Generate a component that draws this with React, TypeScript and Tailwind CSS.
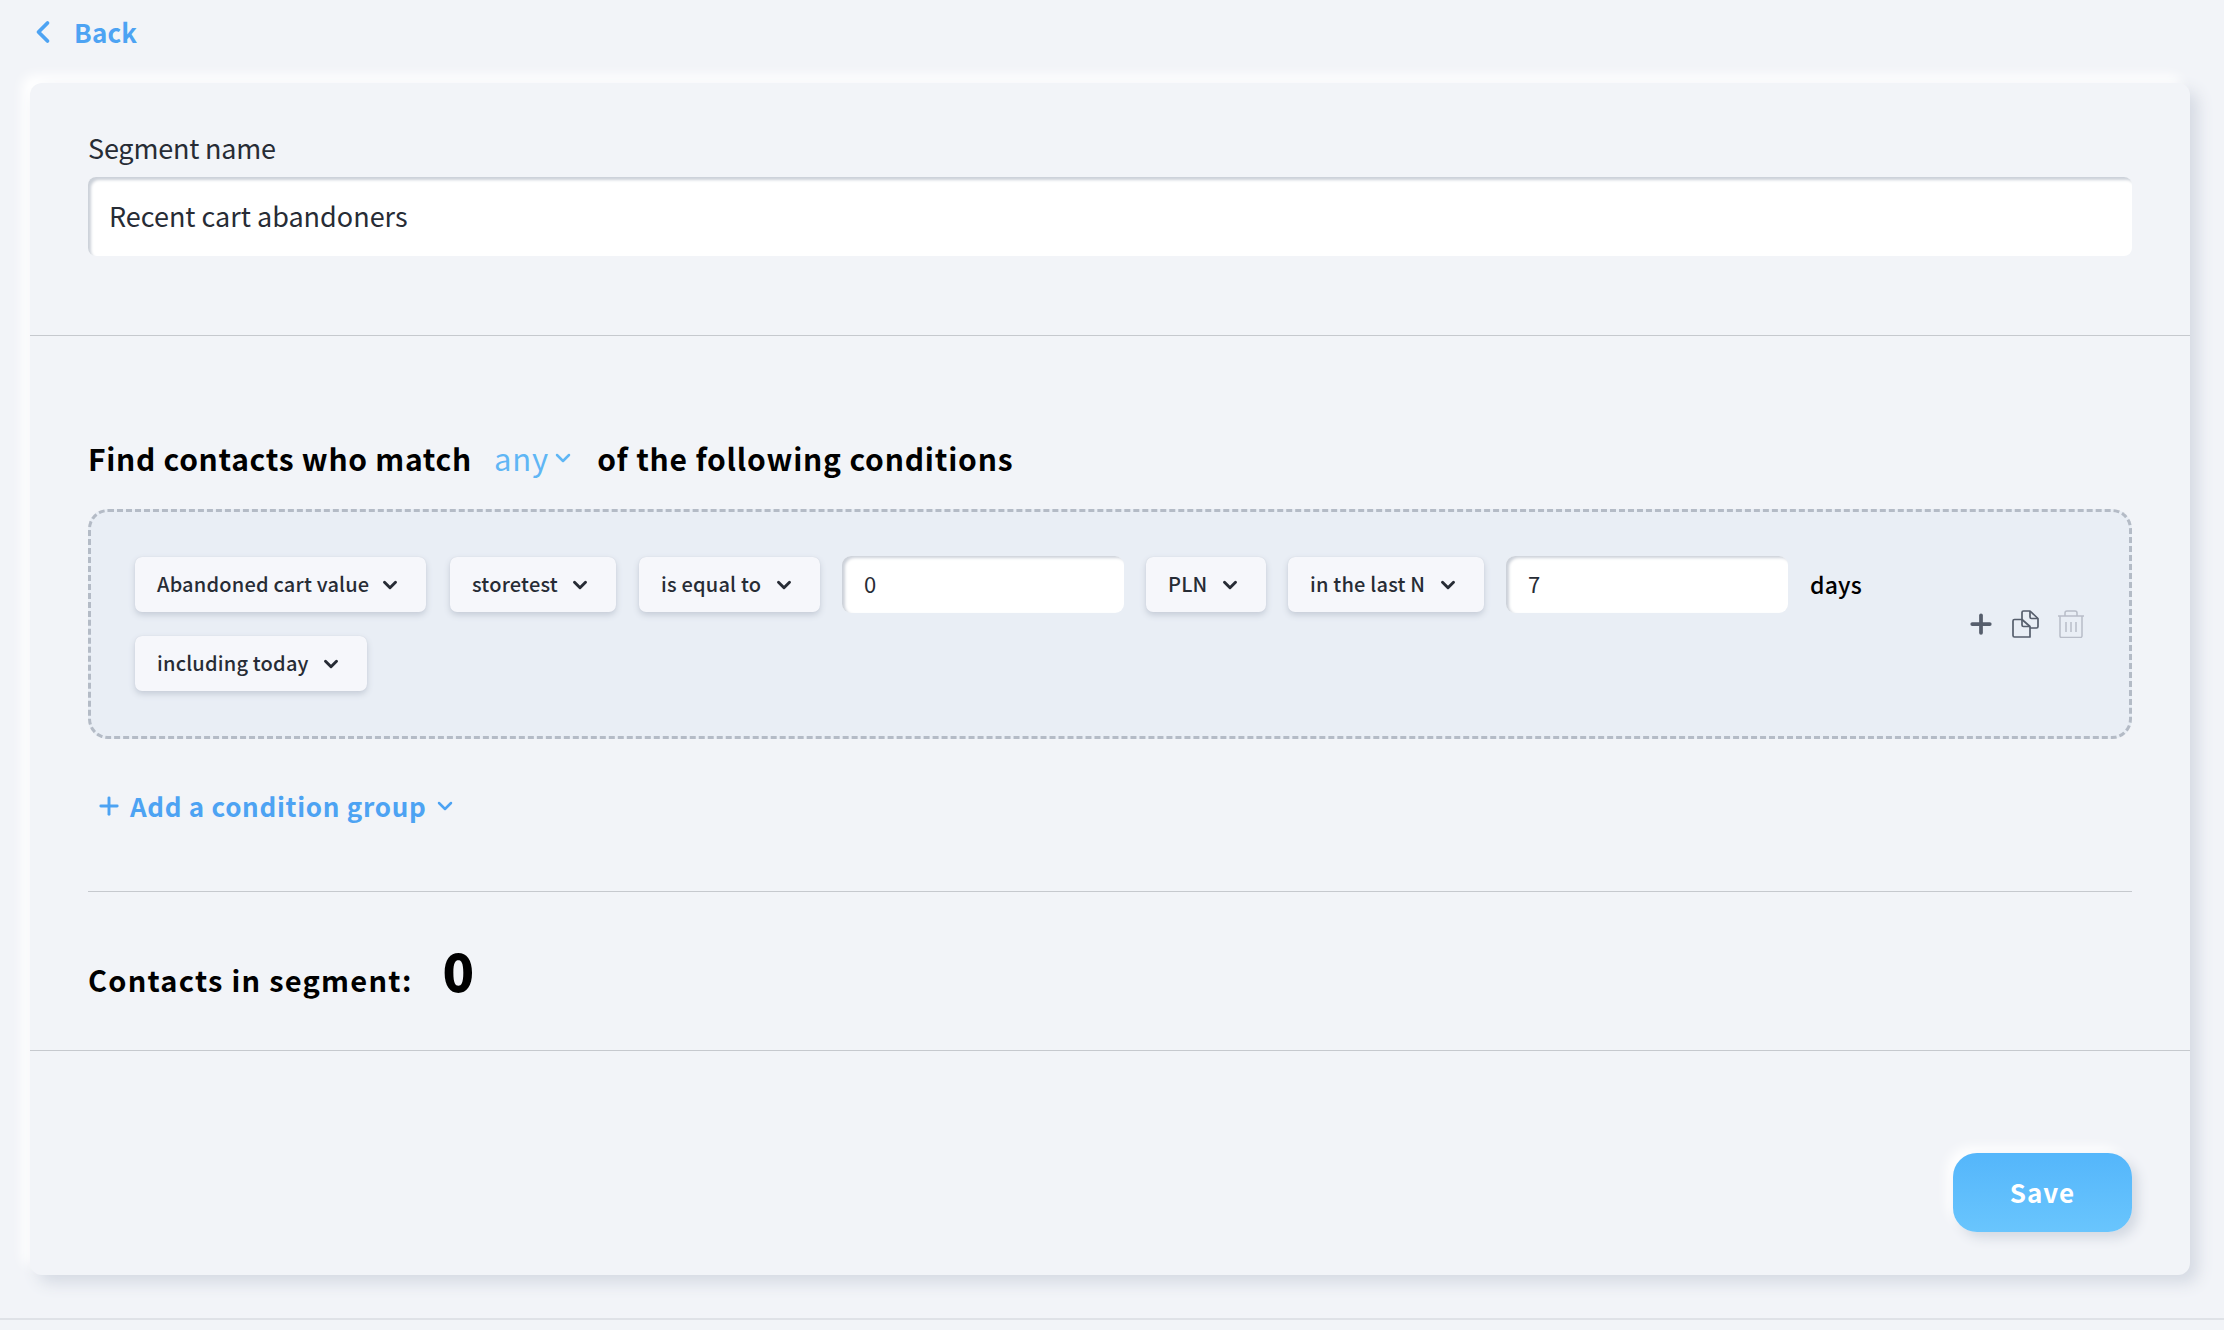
import { ChevronDown, ChevronLeft, Plus } from 'lucide-react';

const font = "font-['Noto_Sans_CJK_JP','Noto_Sans',sans-serif]";

// dropdown pill in a condition row
function Pill({ label, w }: { label: string; w: string }) {
  return (
    <button
      className={`${w} h-[55px] flex items-center justify-between pl-[22px] pr-[25px] rounded-[7px] bg-[#f6f7fb] shadow-[0_3px_6px_#c5ccd7,0_0_1px_#c5ccd7] text-[20px] font-medium text-[#272c35] tracking-[0.2px] whitespace-nowrap`}
    >
      <span className="pb-[1px]">{label}</span>
      <ChevronDown size={22} strokeWidth={3.2} className="text-[#272c35]" />
    </button>
  );
}

function ValueInput({ value }: { value: string }) {
  return (
    <div className="w-[282px] h-[57px] flex items-center pl-[22px] pb-[2px] rounded-[9px] bg-white shadow-[inset_3px_2px_3px_#ccd1d9] text-[22px] text-[#272c35]">
      {value}
    </div>
  );
}

function CopyIcon() {
  return (
    <svg width="28" height="28" viewBox="0 0 28 28" fill="none" stroke="#565e6c" strokeWidth="1.7" strokeLinejoin="round">
      <path d="M11 9.5V2.500A1.500 1.500 0 0 1 12.500 1H19l8 7.500V16.500A1.500 1.500 0 0 1 25.500 18H19" />
      <path d="M19 1v6a1.500 1.500 0 0 0 1.500 1.500H27" />
      <path d="M2 11A1.500 1.500 0 0 1 3.500 9.500H11l8 7V27H3.500A1.500 1.500 0 0 1 2 25.500Z" />
      <path d="M11 9.500v5.500a1.500 1.500 0 0 0 1.500 1.500H19" />
    </svg>
  );
}

function TrashIcon() {
  return (
    <svg width="28" height="28" viewBox="0 0 28 28" fill="none" stroke="#b8bdc8" strokeWidth="1.500">
      <path d="M1 6h26" />
      <path d="M8 6V3a2 2 0 0 1 2-2h8a2 2 0 0 1 2 2v3" />
      <path d="M3 6v20a1.500 1.500 0 0 0 1.500 1.500h19A1.500 1.500 0 0 0 25 26V6" />
      <path d="M9 12v10M14 12v10M19 12v10" />
    </svg>
  );
}

export default function App() {
  return (
    <div className={`${font} min-h-screen bg-[#f2f4f8] flex flex-col`}>
      {/* back link */}
      <div className="h-[83px] pl-[32px] pt-[14px] flex items-start">
        <a className="flex items-center gap-[13px] text-[26px] leading-[36px] font-bold text-[#4da3f3] tracking-[0.2px]">
          <ChevronLeft size={36} strokeWidth={2.5} className="-ml-[7px]" />
          Back
        </a>
      </div>

      <main className="mx-[30px] w-[2160px] h-[1192px] rounded-[12px] bg-[#f2f4f8] shadow-[8px_8px_16px_#d5dae3,-8px_-8px_12px_#ffffff] flex flex-col">
        <section className="h-[253px] px-[58px] pt-[47px] border-b-[1.5px] border-[#c6c9ce]">
          <label className="block text-[27px] leading-[36px] text-[#272c35] tracking-[-0.2px]">Segment name</label>
          <div className="mt-[11px] h-[79px] flex items-center pl-[21px] pb-[1px] rounded-[8px] bg-white shadow-[inset_3px_3px_3px_#ccd1d9] text-[27px] text-[#272c35]">
            Recent cart abandoners
          </div>
        </section>

        <section className="h-[555px] px-[58px]">
          <div className="pt-[99px] h-[173px] flex items-start text-[30px] leading-[46px] font-bold text-black">
            <span className="tracking-[0.7px]">Find contacts who match</span>
            <span className="ml-[22px] font-normal text-[31px] tracking-[0.9px] text-[#5fb6f5] flex items-center gap-[2px]">
              any
              <ChevronDown size={24} strokeWidth={2.5} />
            </span>
            <span className="ml-[22px] tracking-[0.8px]">of the following conditions</span>
          </div>

          <div className="h-[230px] flex items-center rounded-[20px] border-[3px] border-dashed border-[#b4bbc6] bg-[#e9eef5] pl-[44px] pr-[44px] pb-[1px]">
            <div className="flex-1 flex flex-wrap items-center gap-x-[22px] gap-y-[23px]">
              <Pill label="Abandoned cart value" w="w-[291px] mr-[2px]" />
              <Pill label="storetest" w="w-[166px] mr-[1px]" />
              <Pill label="is equal to" w="w-[181px]" />
              <ValueInput value="0" />
              <Pill label="PLN" w="w-[120px]" />
              <Pill label="in the last N" w="w-[196px]" />
              <ValueInput value="7" />
              <span className="text-[23px] font-medium text-black tracking-[0.2px]">days</span>
              <Pill label="including today" w="w-[232px]" />
            </div>
            <div className="flex items-center ml-[10px]">
              <Plus size={30} strokeWidth={3} className="text-[#565e6c] mr-[15px]" />
              <CopyIcon />
              <div className="ml-[18px]">
                <TrashIcon />
              </div>
            </div>
          </div>

          <a className="mt-[47px] ml-[7px] flex items-center text-[26px] leading-[40px] font-bold text-[#4da3f3] tracking-[0.7px]">
            <Plus size={28} strokeWidth={2.5} className="mr-[7px]" />
            Add a condition group
            <ChevronDown size={24} strokeWidth={2.5} className="ml-[7px]" />
          </a>

          <div className="mt-[65px] border-t-[1.5px] border-[#c6c9ce]" />
        </section>

        <section className="h-[160px] px-[58px] border-b-[1.5px] border-[#c6c9ce]">
          <div className="pt-[49px] flex items-baseline text-black">
            <span className="text-[29px] leading-[46px] font-bold tracking-[1.25px]">Contacts in segment:</span>
            <span className="ml-[30px] text-[52px] leading-[60px] font-black">0</span>
          </div>
        </section>

        <div className="flex-1 flex justify-end items-start px-[58px] pt-[102px]">
          <button className="w-[179px] h-[79px] pb-[2px] rounded-[24px] bg-gradient-to-b from-[#54b6fb] to-[#69c5fd] shadow-[6px_6px_12px_#d3d9e2,-6px_-6px_12px_#ffffff] text-white text-[26px] font-bold tracking-[1px]">
            Save
          </button>
        </div>
      </main>

      <div className="mt-[43px] border-t-2 border-[#dfe2e7]" />
    </div>
  );
}
